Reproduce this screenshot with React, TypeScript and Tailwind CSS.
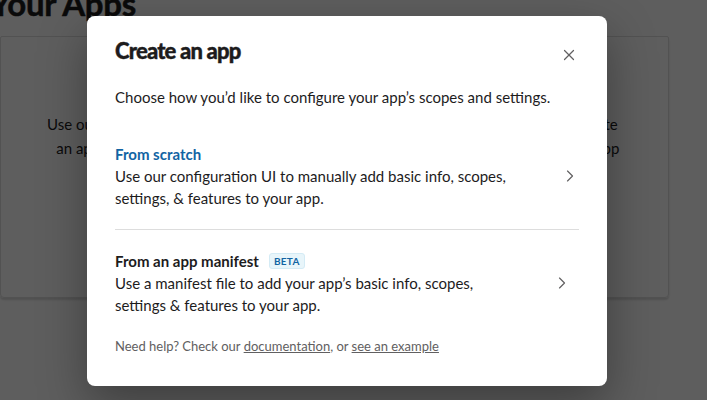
import { X, ChevronRight } from 'lucide-react'

function Option({
  title,
  blue,
  beta,
  lines,
  chevronClass
}: {
  title: string
  blue?: boolean
  beta?: boolean
  lines: string[]
  chevronClass: string
}) {
  return (
    <div className="flex items-center">
      <div className="flex-1">
        <div className="flex items-center gap-2">
          <span className={`text-[15px] leading-[22px] font-bold ${blue ? 'text-[#1264a3]' : 'text-[#1d1c1d]'}`}>
            {title}
          </span>
          {beta ? (
            <span className="ml-[2px] rounded-[3px] border border-[#d4ebf5] bg-[#e8f5fa] px-[4px] text-[10px] leading-[14px] font-bold tracking-[0.3px] text-[#1264a3]">
              BETA
            </span>
          ) : null}
        </div>
        {lines.map((l) => (
          <p key={l} className="text-[15px] leading-[22px] text-[#1d1c1d]">
            {l}
          </p>
        ))}
      </div>
      <ChevronRight className={`h-[20px] w-[20px] text-[#616061] ${chevronClass}`} strokeWidth={1.4} />
    </div>
  )
}

export default function App() {
  return (
    <div className="relative h-[400px] w-[707px] overflow-hidden bg-white font-['Lato','Noto_Sans',sans-serif]">
      <h1 className="-ml-[10px] -mt-[19px] text-[33px] leading-[44px] font-bold tracking-[-0.3px] text-[#1d1c1d] [-webkit-text-stroke:0.5px_#1d1c1d]">
        Your Apps
      </h1>
      <div className="mt-[11px] flex h-[262px] w-[669px] rounded-b-[4px] rounded-t-[2px] border border-[#dddddd] shadow-[0_2px_2px_rgba(0,0,0,0.15)]">
        <div className="flex-1 pt-[75px] text-center text-[15px] leading-[24px] text-[#1d1c1d]">
          Use our configuration UI to manually
          <br />
          an app with basic info and scopes.
        </div>
        <div className="flex-1 pt-[75px] text-center text-[15px] leading-[24px] text-[#1d1c1d]">
          Use a manifest file to quickly create
          <br />
          an app with settings and scopes app
        </div>
      </div>

      <div className="absolute inset-0 bg-[rgba(0,0,0,0.63)]" />

      <div className="absolute left-[87px] top-[16px] h-[370px] w-[520px] rounded-[8px] bg-white px-[28px] pt-[21px] shadow-[0_18px_48px_rgba(0,0,0,0.35)]">
        <div className="flex items-center justify-between">
          <h2 className="text-[22px] leading-[28px] font-black tracking-[-0.8px] text-[#1d1c1d] [-webkit-text-stroke:0.4px_#1d1c1d]">
            Create an app
          </h2>
          <X className="mr-[1px] mt-[7px] h-[18px] w-[18px] text-[#616061]" strokeWidth={1.6} />
        </div>
        <p className="mt-[21px] text-[15px] leading-[22px] text-[#1d1c1d]">
          Choose how you’d like to configure your app’s scopes and settings.
        </p>
        <div className="mt-[35px] border-b border-[#dddddd] pb-[20px]">
          <Option
            title="From scratch"
            blue
            lines={['Use our configuration UI to manually add basic info, scopes,', 'settings, & features to your app.']}
            chevronClass="-mr-[1px]"
          />
        </div>
        <div className="pt-[20px]">
          <Option
            title="From an app manifest"
            beta
            lines={['Use a manifest file to add your app’s basic info, scopes,', 'settings & features to your app.']}
            chevronClass="mr-[7px]"
          />
        </div>
        <p className="mt-[21px] text-[13px] leading-[18px] text-[#616061]">
          Need help? Check our <span className="underline">documentation</span>, or{' '}
          <span className="underline">see an example</span>
        </p>
      </div>
    </div>
  )
}
